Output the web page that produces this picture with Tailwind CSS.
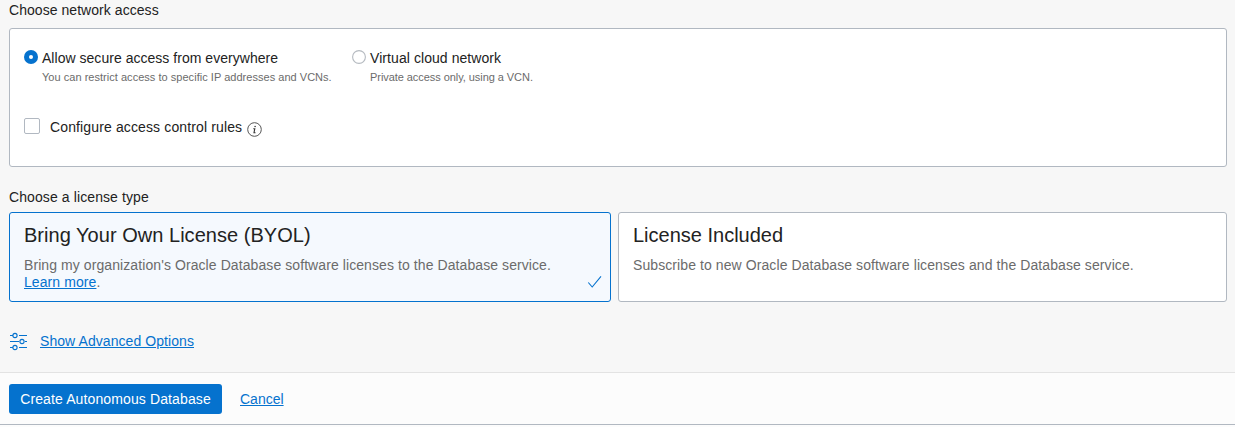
<!DOCTYPE html>
<html lang="en">
<head>
<meta charset="utf-8">
<title>Create Autonomous Database</title>
<script src="https://cdn.jsdelivr.net/npm/@tailwindcss/browser@4"></script>
</head>
<body class="h-[427px] overflow-hidden bg-[#fcfcfc] font-['Liberation_Sans',Arial,sans-serif] text-sm text-[#222]">
<main class="flex h-[372px] flex-col bg-[#f7f7f7] pl-[9px] pr-2">
  <h2 class="h-7 leading-5 tracking-[0.05px]">Choose network access</h2>
  <section class="h-[139px] rounded-[3px] border border-[#b1b8c1] bg-white pl-3.5 pt-[19px]">
    <div class="flex">
      <label class="flex w-[328px] gap-1">
        <svg class="mt-[2px] size-3.5 shrink-0" viewBox="0 0 14 14"><circle cx="7" cy="7" r="7" fill="#0572ce"/><circle cx="7" cy="7" r="2" fill="#fff"/></svg>
        <span class="whitespace-nowrap tracking-[0.03px]"><span class="block leading-5">Allow secure access from everywhere</span><span class="block text-[11px] leading-[18px] text-[#6b6b6b]">You can restrict access to specific IP addresses and VCNs.</span></span>
      </label>
      <label class="flex gap-1">
        <svg class="mt-[2px] size-3.5 shrink-0" viewBox="0 0 14 14"><circle cx="7" cy="7" r="6.4" fill="#fff" stroke="#b5bac0" stroke-width="1.1"/></svg>
        <span class="whitespace-nowrap"><span class="block leading-5 tracking-[0.07px]">Virtual cloud network</span><span class="block text-[11px] leading-[18px] tracking-[-0.06px] text-[#6b6b6b]">Private access only, using a VCN.</span></span>
      </label>
    </div>
    <label class="mt-[31px] flex h-5">
      <span class="mt-[1px] size-4 rounded-[2px] border border-[#b1b8c1] bg-white"></span>
      <span class="ml-2.5 leading-5 tracking-[0.13px]">Configure access control rules</span>
      <svg class="ml-[5px] mt-[5px] size-[15px]" viewBox="0 0 15 15"><circle cx="7.5" cy="7.5" r="6.8" fill="none" stroke="#555"/><circle cx="8.1" cy="4.5" r=".8" fill="#333"/><path d="M6.3 6.7H7.8L7 10.7H8.5" fill="none" stroke="#333" stroke-width="1.1"/></svg>
    </label>
  </section>
  <h2 class="mt-5 h-[25px] leading-5 tracking-[0.1px]">Choose a license type</h2>
  <div class="flex h-[90px] gap-[7px]">
    <section class="relative w-[602px] rounded-[3px] border border-[#0572ce] bg-[#f5f9fe] px-3.5 pt-2">
      <h3 class="text-xl leading-7 tracking-[0.03px]">Bring Your Own License (BYOL)</h3>
      <p class="mt-2 leading-[17px] tracking-[0.083px] text-[#6b6b6b]">Bring my organization's Oracle Database software licenses to the Database service.<br><a class="text-[#0572ce] underline">Learn more</a>.</p>
      <svg class="absolute bottom-[12px] right-[8px] h-[14px] w-[15px]" viewBox="0 0 15 14" fill="none" stroke="#0572ce" stroke-width="1.1"><path d="M1.3 7.5L5.2 12L14 1.3"/></svg>
    </section>
    <section class="flex-1 rounded-[3px] border border-[#b1b8c1] bg-white px-3.5 pt-2">
      <h3 class="text-xl leading-7">License Included</h3>
      <p class="mt-2 leading-[17px] tracking-[0.087px] text-[#6b6b6b]">Subscribe to new Oracle Database software licenses and the Database service.</p>
    </section>
  </div>
  <div class="mt-[29px] flex h-5 text-[#0572ce]">
    <svg class="ml-px mt-[1px] h-[19px] w-[17px]" viewBox="0 0 17 19" fill="none" stroke="currentColor"><path d="M0 3.5H3M9 3.5H17M0 9.5H9M15 9.5H17M0 15.5H3M9 15.5H17"/><circle cx="5" cy="3.5" r="2.1" stroke-width="1.1"/><circle cx="12" cy="9.5" r="2.1" stroke-width="1.1"/><circle cx="5" cy="15.5" r="2.1" stroke-width="1.1"/></svg>
    <a class="ml-[13px] leading-5 tracking-[0.07px] underline">Show Advanced Options</a>
  </div>
</main>
<footer class="flex h-[53px] gap-[18px] border-b border-t border-b-[#b1b8c1] border-t-[#e3e3e3] bg-[#fcfcfc] pl-[9px] pt-[11px]">
  <button class="h-[30px] w-[213px] rounded-[3px] bg-[#0572ce] tracking-[0.12px] text-white">Create Autonomous Database</button>
  <a class="leading-[30px] text-[#0572ce] underline">Cancel</a>
</footer>
</body>
</html>
